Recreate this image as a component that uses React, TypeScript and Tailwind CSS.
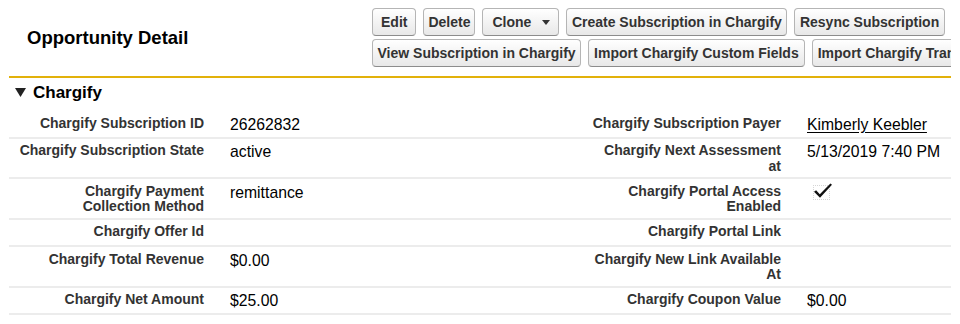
import React from "react";

type RowData = {
  l1: React.ReactNode;
  v1?: React.ReactNode;
  l2: React.ReactNode;
  v2?: React.ReactNode;
};

function Btn({ children, className = "" }: { children: React.ReactNode; className?: string }) {
  return (
    <div
      className={
        "shrink-0 h-[28px] flex items-center justify-center rounded-[4px] border border-[#b5b5b5] border-b-[#8c8c8c] bg-gradient-to-b from-white to-[#e8e8e8] text-[14px] font-bold text-[#333] whitespace-nowrap " +
        className
      }
    >
      {children}
    </div>
  );
}

function Check() {
  return (
    <div className="relative ml-[6px] mt-[1px] w-[17px] h-[15px] border border-dotted border-[#d6d6d6]">
      <svg
        className="absolute left-[-1px] top-[-3px]"
        width="21"
        height="16"
        viewBox="0 0 21 16"
      >
        <path d="M1 8.8 L3.1 7.3 L6.8 11.2 L17.4 0.5 L19 1.8 L7 14.8 Z" fill="#111" />
      </svg>
    </div>
  );
}

const rows: RowData[] = [
  {
    l1: "Chargify Subscription ID",
    v1: "26262832",
    l2: "Chargify Subscription Payer",
    v2: <span className="underline underline-offset-[2px]">Kimberly Keebler</span>,
  },
  {
    l1: "Chargify Subscription State",
    v1: "active",
    l2: (
      <>
        Chargify Next Assessment
        <br />
        at
      </>
    ),
    v2: "5/13/2019 7:40 PM",
  },
  {
    l1: (
      <>
        Chargify Payment
        <br />
        Collection Method
      </>
    ),
    v1: "remittance",
    l2: (
      <>
        Chargify Portal Access
        <br />
        Enabled
      </>
    ),
    v2: <Check />,
  },
  { l1: "Chargify Offer Id", l2: "Chargify Portal Link" },
  {
    l1: "Chargify Total Revenue",
    v1: "$0.00",
    l2: (
      <>
        Chargify New Link Available
        <br />
        At
      </>
    ),
  },
  {
    l1: "Chargify Net Amount",
    v1: "$25.00",
    l2: "Chargify Coupon Value",
    v2: "$0.00",
  },
];

function Row({ r }: { r: RowData }) {
  const label =
    "pr-[10px] pt-[4.35px] pb-[3.15px] text-right text-[14px] leading-[15.5px] font-bold text-[#333] whitespace-nowrap";
  const value =
    "pl-[16px] pt-[4.35px] pb-[3.15px] text-[15.75px] leading-[15.5px] text-black whitespace-nowrap";
  return (
    <div className="flex min-h-[27.5px] border-b-2 border-[#ececec]">
      <div className={"w-[205px] shrink-0 " + label}>{r.l1}</div>
      <div className={"w-[377px] shrink-0 " + value}>
        <div className="mt-[1px]">{r.v1}</div>
      </div>
      <div className={"w-[200px] shrink-0 " + label}>{r.l2}</div>
      <div className={"w-[160px] shrink-0 " + value}>
        <div className="mt-[1px]">{r.v2}</div>
      </div>
    </div>
  );
}

export default function App() {
  return (
    <div className="w-[960px] h-[324px] bg-white overflow-hidden font-['Liberation_Sans',Arial,sans-serif]">
      <div className="ml-[9px] w-[942px]">
        {/* Header */}
        <div className="flex items-center pt-[8px] pb-[9px] border-b-2 border-[#e2b10a]">
          <div className="w-[363px] shrink-0 pl-[18px] text-[18.5px] font-bold text-black">
            Opportunity Detail
          </div>
          <div className="flex-1 min-w-0 overflow-hidden flex flex-col gap-[3px]">
            <div className="flex gap-[7px]">
              <Btn className="min-w-[44px] px-[8px]">Edit</Btn>
              <Btn className="px-[4px]">Delete</Btn>
              <Btn className="pl-[9px] pr-[8px]">
                Clone
                <svg className="ml-[11px]" width="8" height="5" viewBox="0 0 8 5">
                  <path d="M0 0 L8 0 L4 5 Z" fill="#333" />
                </svg>
              </Btn>
              <Btn className="px-[4.5px]">Create Subscription in Chargify</Btn>
              <Btn className="px-[4.5px]">Resync Subscription</Btn>
            </div>
            <div className="flex gap-[7px]">
              <Btn className="px-[4.5px]">View Subscription in Chargify</Btn>
              <Btn className="px-[5px]">Import Chargify Custom Fields</Btn>
              <Btn className="px-[5px]">Import Chargify Transactions</Btn>
            </div>
          </div>
        </div>

        {/* Section header */}
        <div className="h-[33.5px] flex items-center pl-[6px] pb-[3.5px]">
          <svg width="11" height="9" viewBox="0 0 11 9" className="mt-[-1px]">
            <path d="M0 0 L11 0 L5.5 9 Z" fill="#222" />
          </svg>
          <span className="ml-[7px] text-[17px] font-bold text-black">Chargify</span>
        </div>

        {/* Rows */}
        <div>
          {rows.map((r, i) => (
            <Row key={i} r={r} />
          ))}
        </div>
      </div>
    </div>
  );
}
